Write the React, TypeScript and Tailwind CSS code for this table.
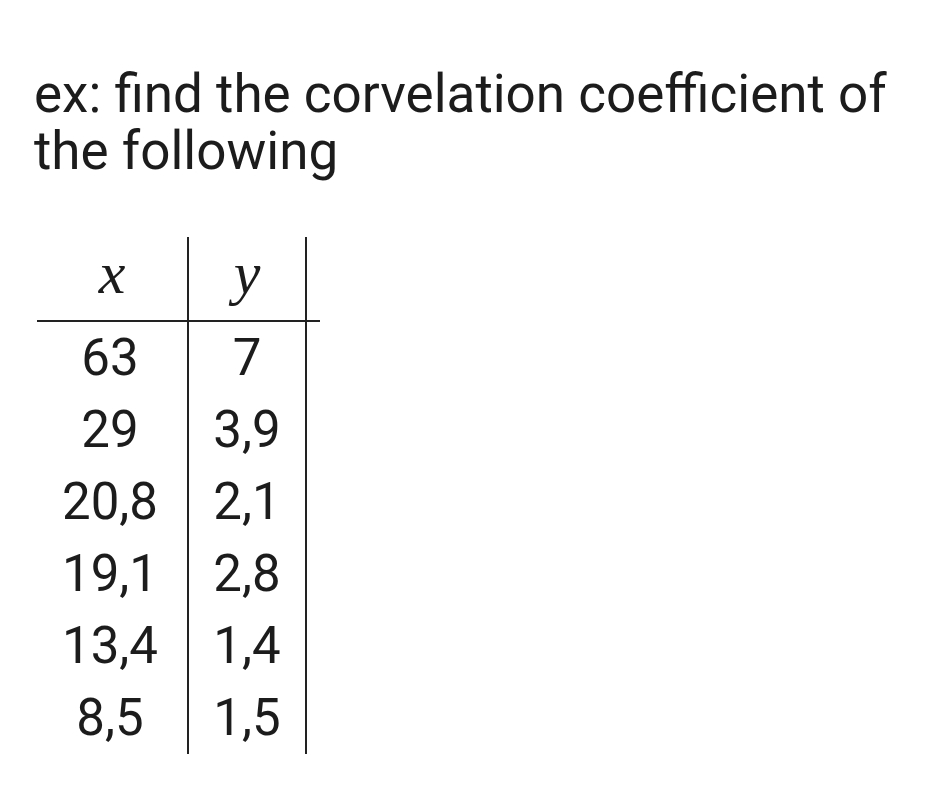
const rows: [string, string][] = [
  ["63", "7"],
  ["29", "3,9"],
  ["20,8", "2,1"],
  ["19,1", "2,8"],
  ["13,4", "1,4"],
  ["8,5", "1,5"],
]

export default function App() {
  return (
    <div className="w-[937px] h-[785px] bg-white text-[#1c1c1c] font-['Roboto',sans-serif] pl-[34px] pt-[66px] overflow-hidden">
      <p className="text-[53px] leading-[57px] w-[890px]">
        ex: find the corvelation coefficient of the following
      </p>

      {/* data table */}
      <div className="mt-[57px] ml-[3px] grid grid-cols-[150px_120px_13px] w-[283px]">
        <div className="h-[85px] border-b-2 border-[#222] flex justify-center pt-[6px]">
          <span className="font-['Liberation_Serif',serif] italic text-[60px] leading-none">x</span>
        </div>
        <div className="h-[85px] border-b-2 border-x-2 border-[#222] flex justify-center pt-[6px]">
          <span className="font-['Liberation_Serif',serif] italic text-[60px] leading-none">y</span>
        </div>
        <div className="h-[85px] border-b-2 border-[#222]" />

        {rows.map(([x, y]) => (
          <div key={x} className="contents">
            <div className="text-[51px] leading-[72px] text-center pr-[4px]">{x}</div>
            <div className="text-[51px] leading-[72px] text-center border-x-2 border-[#222]">{y}</div>
            <div />
          </div>
        ))}
      </div>
    </div>
  )
}
